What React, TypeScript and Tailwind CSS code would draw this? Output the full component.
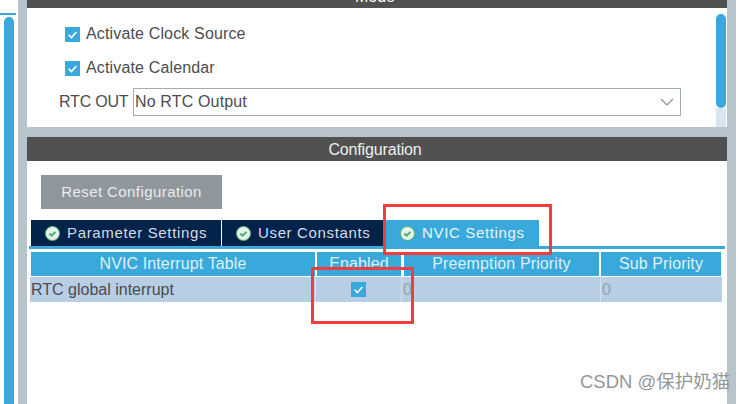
const font = { fontFamily: '"Liberation Sans", Arial, "Noto Sans CJK SC", sans-serif' };

function Check({ size = 15 }: { size?: number }) {
  return (
    <span
      className="flex shrink-0 items-center justify-center bg-[#39a9dd]"
      style={{ width: size, height: size }}
    >
      <svg viewBox="0 0 15 15" className="h-full w-full" aria-hidden="true">
        <path d="M3.6 7.8l2.8 2.8 5-5.6" fill="none" stroke="#fff" strokeWidth="1.6" />
      </svg>
    </span>
  );
}

function TabIcon() {
  return (
    <svg viewBox="0 0 16 16" className="h-[15px] w-[15px] shrink-0" aria-hidden="true">
      <circle cx="8" cy="8" r="7.5" fill="#e6f3ea" stroke="#4fae72" strokeWidth="1" />
      <path d="M4.6 8l2.4 2.4 4.2-4.2" fill="none" stroke="#4fae72" strokeWidth="2" />
    </svg>
  );
}

function Tab({ label, width, active }: { label: string; width: string; active?: boolean }) {
  return (
    <div
      className={`flex h-[26px] items-center gap-[7px] pl-[14px] text-[15px] tracking-[0.65px] ${width} ${
        active ? "bg-[#39a9dc] text-[#eaf6fb]" : "bg-[#03234b] text-[#d5dde6]"
      }`}
    >
      <TabIcon />
      <span className="pt-px">{label}</span>
    </div>
  );
}

function HeadCell({ label, width }: { label: string; width: string }) {
  return (
    <div
      className={`flex h-[24px] items-center justify-center bg-[#39a9dc] text-[16px] tracking-[0.12px] text-[#dff1f9] ${width}`}
    >
      {label}
    </div>
  );
}

function Row({ label, checked, width }: { label?: string; checked?: boolean; width: string }) {
  return (
    <div className={`flex h-[24px] items-center ${width} ${checked ? "justify-center" : "pl-px"}`}>
      {checked ? <Check /> : null}
      {label ? <span>{label}</span> : null}
    </div>
  );
}

export default function App() {
  return (
    <div className="relative flex h-[404px] w-[747px] overflow-hidden bg-white" style={font}>
      {/* left strip */}
      <div className="flex w-[18px] shrink-0 flex-col pl-1 pr-1">
        <div className="-ml-1 mt-[13px] h-[2px] w-4 bg-[#39a9dc]" />
        <div className="mt-[2px] flex-1 rounded-t-[5px] bg-[#39a9dd]" />
      </div>
      <div className="w-[9px] shrink-0 bg-[#b8c4cb]" />

      <div className="flex w-[700px] shrink-0 flex-col">
        {/* mode panel */}
        <div className="flex h-[8px] items-end justify-center overflow-hidden bg-[#505150] pr-1 text-[16px] leading-[16px] text-white">
          <span className="mb-[3px]">Mode</span>
        </div>
        <div className="flex h-[119px] bg-white">
          <div className="flex-1 pl-[38px] text-[16px] text-[#4c4c50]">
            <div className="mt-[14px] flex items-center gap-[6px] tracking-[0.15px]">
              <Check />
              <span>Activate Clock Source</span>
            </div>
            <div className="mt-[10px] flex items-center gap-[6px] tracking-[0.15px]">
              <Check />
              <span>Activate Calendar</span>
            </div>
            <div className="-ml-[6px] mt-[8px] flex items-center gap-[5px]">
              <span className="w-[69px] whitespace-nowrap tracking-[-0.2px]">RTC OUT</span>
              <div className="flex h-[28px] w-[548px] items-center justify-between border border-[#a6adb2] pl-px pr-[6px]">
                <span className="tracking-[0.15px]">No RTC Output</span>
                <svg viewBox="0 0 14 8" className="h-2 w-[14px]" aria-hidden="true">
                  <path d="M1 1l6 6 6-6" fill="none" stroke="#8b8f92" strokeWidth="1.2" />
                </svg>
              </div>
            </div>
          </div>
          <div className="flex w-[10px] flex-col bg-white pt-[6px]">
            <div className="h-[94px] rounded-[5px] bg-[#39a9dd]" />
            <div className="flex-1 bg-[#d8e6f3]" />
          </div>
          <div className="w-px" />
        </div>

        <div className="h-[10px] bg-[#b8c4cb]" />

        {/* configuration panel */}
        <div className="flex h-[24px] items-center justify-center bg-[#505150] pt-px pr-1 text-[16px] tracking-[-0.15px] text-[#eef0f0]">
          Configuration
        </div>
        <div className="flex-1 bg-white pt-[14px]">
          <div className="ml-[14px] flex h-[34px] w-[181px] items-center justify-center bg-[#8f979d] text-[15px] tracking-[0.42px] text-[#e9ecee]">
            Reset Configuration
          </div>
          <div className="ml-1 mt-[11px] flex gap-px">
            <Tab label="Parameter Settings" width="w-[190px]" />
            <Tab label="User Constants" width="w-[163px]" />
            <Tab label="NVIC Settings" width="w-[153px]" active />
          </div>
          <div className="ml-[2px] h-[3px] w-[696px] bg-[#39a9dc]" />
          <div className="ml-1 mt-[3px] flex gap-[2px]">
            <HeadCell label="NVIC Interrupt Table" width="w-[284px]" />
            <HeadCell label="Enabled" width="w-[84px]" />
            <HeadCell label="Preemption Priority" width="ml-px w-[195px]" />
            <HeadCell label="Sub Priority" width="w-[120px]" />
          </div>
          <div className="ml-[3px] mt-px flex h-[25px] w-[692px] items-center bg-[#b7cee4] text-[16px] text-[#4b4b50]">
            <Row label="RTC global interrupt" width="w-[285px]" />
            <div className="h-full w-px bg-[#d5e1ed]" />
            <Row checked width="w-[85px]" />
            <div className="h-full w-px bg-[#d5e1ed]" />
            <Row label="0" width="w-[198px] text-[#98a4ae]" />
            <div className="h-full w-px bg-[#d5e1ed]" />
            <Row label="0" width="w-[121px] text-[#98a4ae]" />
          </div>
        </div>
      </div>

      <div className="w-[9px] shrink-0 bg-[#b8c4cb]" />

      {/* annotations drawn on top of the screenshot */}
      <div className="absolute left-[383px] top-[204px] h-[51px] w-[169px] border-[3px] border-[#f43c3c]" />
      <div className="absolute left-[311px] top-[267px] h-[57px] w-[103px] border-[3px] border-[#f43c3c]" />
      <div className="absolute left-[580px] top-[372px] whitespace-nowrap text-[18.5px] leading-[20px] text-[#969696]">
        CSDN @保护奶猫
      </div>
    </div>
  );
}
